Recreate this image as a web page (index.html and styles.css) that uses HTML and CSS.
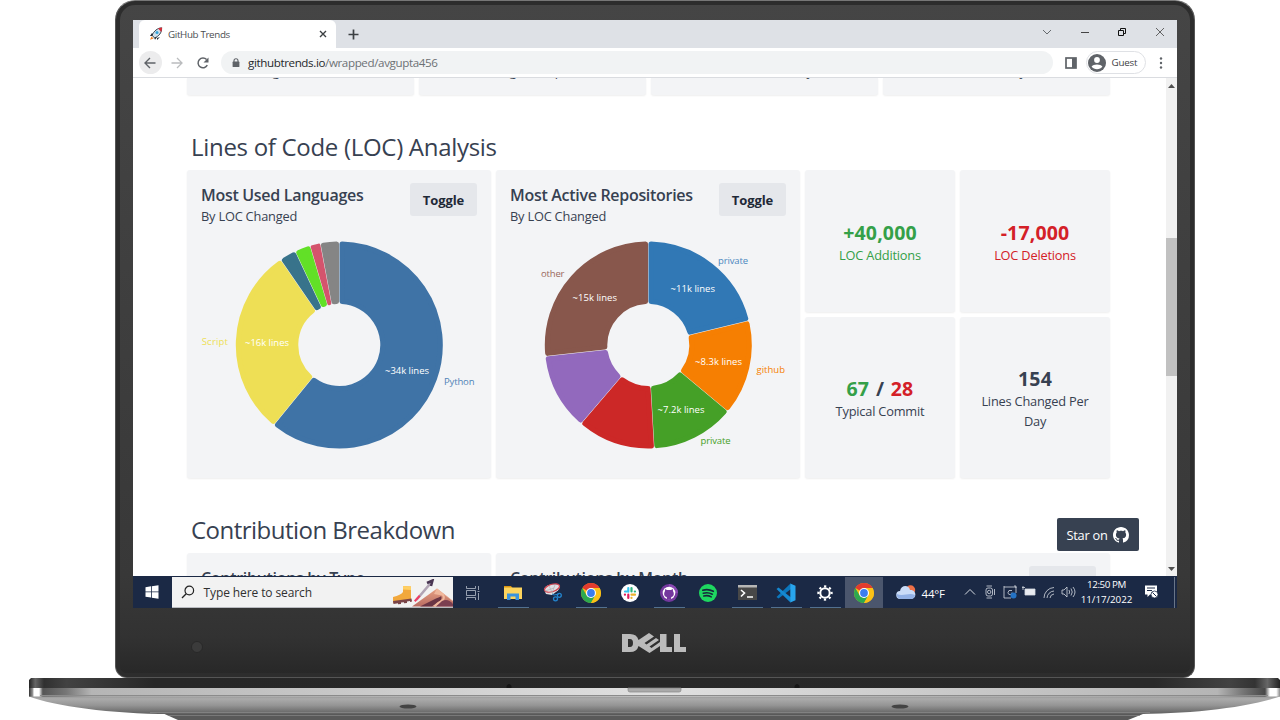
FILE: index.html
```html
<!DOCTYPE html>
<html lang="en">
<head>
<meta charset="utf-8">
<title>GitHub Trends</title>
<link rel="stylesheet" href="styles.css">
</head>
<body>
<svg class="defs" width="0" height="0" aria-hidden="true">
  <defs>
    <symbol id="chrome" viewBox="0 0 20 20">
      <circle cx="10" cy="10" r="10" fill="#fbc116"/>
      <path d="M10 10 1.34 5A10 10 0 0 1 18.66 5H10z" fill="#e33b2e"/>
      <path d="M1.34 5A10 10 0 0 0 10 20L14.33 12.5 10 10 5.67 12.5z" fill="#2da94f"/>
      <path d="M10 5h8.66A10 10 0 0 1 10 20l4.33-7.5z" fill="#fbc116"/>
      <circle cx="10" cy="10" r="5" fill="#fff"/>
      <circle cx="10" cy="10" r="3.9" fill="#3b7ded"/>
    </symbol>
    <symbol id="octocat" viewBox="0 0 16 16">
      <path d="M8 0C3.58 0 0 3.58 0 8c0 3.54 2.29 6.53 5.47 7.59.4.07.55-.17.55-.38 0-.19-.01-.82-.01-1.49-2.01.37-2.53-.49-2.69-.94-.09-.23-.48-.94-.82-1.13-.28-.15-.68-.52-.01-.53.63-.01 1.08.58 1.23.82.72 1.21 1.87.87 2.33.66.07-.52.28-.87.51-1.07-1.78-.2-3.64-.89-3.64-3.95 0-.87.31-1.59.82-2.15-.08-.2-.36-1.02.08-2.12 0 0 .67-.21 2.2.82.64-.18 1.32-.27 2-.27s1.36.09 2 .27c1.53-1.04 2.2-.82 2.2-.82.44 1.1.16 1.92.08 2.12.51.56.82 1.27.82 2.15 0 3.07-1.87 3.75-3.65 3.95.29.25.54.73.54 1.48 0 1.07-.01 1.93-.01 2.2 0 .21.15.46.55.38A8.01 8.01 0 0 0 16 8c0-4.42-3.58-8-8-8z"/>
    </symbol>
  </defs>
</svg>
<div class="device">
  <div class="lid">
    <div class="screen">
      <div class="tabstrip">
        <div class="tab">
          <svg class="rocket" width="14" height="14" viewBox="0 0 14 14"><path d="M3 6 1 9l2 0M8 11l0 2 3-3" fill="#26323d"/><path d="M12.6.8C8.5 1 5 4 3 8.3L5.6 11C10 9 12.800 6 12.600.8z" fill="#cfe0ec" stroke="#26323d" stroke-width=".9"/><path d="M9 1.500 13.200.400 12.300 5z" fill="#dc2b36"/><circle cx="8" cy="5.600" r="1.500" fill="#35a3d8"/><path d="M4 6 1.500 8.500 3.500 9zM8.200 10 6 12.800 5.400 11z" fill="#27303a"/><path d="M2.500 9.500 1 12.800l3.600-1.300z" fill="#f08426"/></svg>
          <span class="tab-title">GitHub Trends</span>
          <svg width="8" height="8" viewBox="0 0 8 8"><path d="M1 1 7 7M7 1 1 7" stroke="#3c4043" stroke-width="1.400"/></svg>
        </div>
        <svg class="newtab" width="11" height="11" viewBox="0 0 11 11"><path d="M5.500.500v10M.500 5.500h10" stroke="#3c4043" stroke-width="1.700"/></svg>
        <div class="winctl">
          <svg width="10" height="10" viewBox="0 0 10 10"><path d="M1 3 5 7 9 3" fill="none" stroke="#666a6e"/></svg>
          <svg width="10" height="10" viewBox="0 0 10 10"><path d="M1 5.500h8" stroke="#444"/></svg>
          <svg width="10" height="10" viewBox="0 0 10 10"><path d="M1.500 3.500h5v5h-5zM3.500 3V1.500h5v5H7" fill="none" stroke="#111"/></svg>
          <svg width="10" height="10" viewBox="0 0 10 10"><path d="M1 1 9 9M9 1 1 9" stroke="#555" stroke-width=".9"/></svg>
        </div>
      </div>
      <div class="toolbar">
        <span class="back"><svg width="12" height="12" viewBox="0 0 12 12"><path d="M11.500 6H1.500M6 1 1 6l5 5" fill="none" stroke="#5f6368" stroke-width="1.400"/></svg></span>
        <svg class="fwd" width="12" height="12" viewBox="0 0 12 12"><path d="M.500 6H10.500M6 1l5 5-5 5" fill="none" stroke="#babcbe" stroke-width="1.300"/></svg>
        <svg class="reload" width="12" height="12" viewBox="0 0 12 12"><path d="M10.300 8.200A4.900 4.900 0 1 1 9.600 2.600" fill="none" stroke="#5f6368" stroke-width="1.500"/><path d="M11.500.500v5h-5z" fill="#5f6368"/></svg>
        <div class="omnibox">
          <svg width="8" height="10" viewBox="0 0 8 10"><path d="M2 4V2.800a2 2 0 0 1 4 0V4" fill="none" stroke="#5f6368" stroke-width="1.100"/><rect x=".6" y="3.600" width="6.800" height="5.400" rx=".6" fill="#5f6368"/></svg>
          <span class="url"><b>githubtrends.io</b>/wrapped/avgupta456</span>
        </div>
        <svg class="panel" width="12" height="12" viewBox="0 0 12 12"><rect x="1" y="1" width="10" height="10" fill="#fff" stroke="#5f6368" stroke-width="1.700"/><path d="M7 1h4v10H7z" fill="#5f6368"/></svg>
        <div class="guest">
          <svg width="18" height="18" viewBox="0 0 18 18"><circle cx="9" cy="9" r="9" fill="#5f6368"/><circle cx="9" cy="6" r="2.900" fill="#fff"/><path d="M3.600 12.600C5 9.800 13 9.800 14.400 12.600 12 16.200 6 16.200 3.600 12.600z" fill="#fff"/></svg>
          <span>Guest</span>
        </div>
        <svg class="dots" width="4" height="14" viewBox="0 0 4 14"><g fill="#5f6368"><circle cx="2" cy="2.500" r="1.200"/><circle cx="2" cy="7" r="1.200"/><circle cx="2" cy="11.500" r="1.200"/></g></svg>
      </div>
      <div class="viewport">
        <main class="page">
          <div class="stats">
            <div class="card"><span class="s1">Longest</span></div>
            <div class="card"><span class="s2">Longest Gap</span></div>
            <div class="card"><span class="s3">Best Day</span></div>
            <div class="card"><span class="s4">Best Day</span></div>
          </div>
          <h1 class="h-loc">Lines of Code (LOC) Analysis</h1>
          <div class="loc">
            <section class="card chart">
              <header><div><h2 class="t-lang">Most Used Languages</h2><p>By LOC Changed</p></div><button>Toggle</button></header>
              <svg class="donut" id="languages" width="278" height="240"></svg>
            </section>
            <section class="card chart">
              <header><div><h2 class="t-repo">Most Active Repositories</h2><p>By LOC Changed</p></div><button>Toggle</button></header>
              <svg class="donut" id="repos" width="277" height="240"></svg>
            </section>
            <div class="card metric green"><strong>+40,000</strong><span>LOC Additions</span></div>
            <div class="card metric red"><strong>-17,000</strong><span>LOC Deletions</span></div>
            <div class="card metric"><strong class="pair"><i class="green">67</i> / <i class="red">28</i></strong><span>Typical Commit</span></div>
            <div class="card metric"><strong>154</strong><span>Lines Changed Per<br>Day</span></div>
          </div>
          <h1 class="h-contrib">Contribution Breakdown</h1>
          <div class="contrib">
            <section class="card"><h2 class="t-type">Contributions by Type</h2></section>
            <section class="card"><h2 class="t-month">Contributions by Month</h2><button></button></section>
          </div>
          <a class="star"><span>Star on</span><svg width="16" height="16" fill="#fff"><use href="#octocat"/></svg></a>
        </main>
        <div class="scrollbar">
          <svg width="7" height="4" viewBox="0 0 7 4"><path d="M0 4 3.500 0 7 4z" fill="#505050"/></svg>
          <div class="thumb"></div>
          <svg class="down" width="7" height="4" viewBox="0 0 7 4"><path d="M0 0 3.500 4 7 0z" fill="#505050"/></svg>
        </div>
      </div>
      <div class="taskbar">
        <span class="start"><svg width="14" height="14" viewBox="0 0 14 14"><path d="M.500 2.200 6 1.300V6.500H.500zM6.800 1.200 13.500.200V6.500H6.800zM.500 7.300H6v5.200L.500 11.700zM6.800 7.300h6.700v6.400L6.800 12.700z" fill="#fff"/></svg></span>
        <div class="search">
          <svg width="14" height="14" viewBox="0 0 14 14"><circle cx="8.300" cy="5.500" r="4.300" fill="none" stroke="#222" stroke-width="1.200"/><path d="M5.200 8.700 1 13" stroke="#222" stroke-width="1.300"/></svg>
          <span>Type here to search</span>
          <svg class="boots" width="61" height="28" viewBox="0 0 61 28"><defs><linearGradient id="peak" x1="0" y1="0" x2="0" y2="1"><stop offset="0" stop-color="#e8a183"/><stop offset="1" stop-color="#b96c62"/></linearGradient></defs><path d="M11 7 19 7.500V21L1 24V18q8-2 10-5z" fill="#f2a83d"/><path d="M11 7 19 7.500v3.500l-8-.5z" fill="#ffcf62"/><path d="M1 22 19.500 19.500l.500 3-2 .5v-1l-3 .5v1.500l-3 .3v-1l-3 .3V25l-3 .3v-1l-4.500.7z" fill="#7a4448"/><path d="M23.500 20 38 3l2 1.500L25.500 21.500z" fill="#b0a3b4"/><path d="m22 21.500 5-5.500 1.500 1.500-5 5.500z" fill="#ef3b64"/><path d="M35 4 40.500 1.500 39 7" fill="none" stroke="#493653" stroke-width="2.500"/><path d="M20 27.500 45 9.500 61 22v5.500z" fill="url(#peak)"/><path d="m28 27.500 16-8q6-2 5-3 2 5-4 7l-3 4z" fill="#6a3544"/><path d="M45 9.500 42 15l8 1.500q3 3-4 6.500l-6 4.500h4c6-4 11-7 8-12l9 7v-.5z" fill="#f0b79c"/><path d="M50 22q6-3 11 3v2.500H44z" fill="#7b3f50"/></svg>
        </div>
        <span class="app"><svg width="15" height="14" viewBox="0 0 15 14"><path d="M1.500 0v2.500h9V0M1.500 14v-2.500h9V14M1.500 4.500h9v5h-9zM13.500 0v4M13.500 7v7M12.500 5.500h2" fill="none" stroke="#b8bfcb" stroke-width=".8"/></svg></span>
        <span class="app run wide"><svg width="18" height="16" viewBox="0 0 18 16"><path d="M0 1h7l1.500 2H0z" fill="#d99512"/><path d="M0 2.500h18V14H0z" fill="#fdd45d"/><path d="M3 15V8.500h12V15h-3.500v-3.500h-5V15z" fill="#3b93dd"/></svg></span>
        <span class="app"><svg width="19" height="19" viewBox="0 0 19 19"><path d="M1 6.500C2 1.500 9 .5 16 1.500q2 2-1 6L9 12l-6-1z" fill="#e1dfe3"/><ellipse cx="9" cy="5" rx="7.800" ry="3.700" transform="rotate(-18 9 5)" fill="none" stroke="#d3424e" stroke-width="1.200"/><path d="m6 3 4 8M12 2 9 10M2 8l9-3" stroke="#aaa" stroke-width=".6"/><path d="m9 11 2 1 5-1" stroke="#2384cd" fill="none"/><circle cx="16.300" cy="12.300" r="2" fill="none" stroke="#2384cd" stroke-width="1.300"/><circle cx="12.500" cy="15.800" r="2" fill="none" stroke="#2384cd" stroke-width="1.300"/></svg></span>
        <span class="app run"><svg width="20" height="20"><use href="#chrome"/></svg></span>
        <span class="app"><svg width="18" height="18" viewBox="0 0 18 18"><circle cx="9" cy="9" r="9" fill="#fff"/><g stroke-width="2.200" stroke-linecap="round"><path d="M7.300 4v3.700M4 7.500h3" stroke="#36c5f0"/><path d="M10.500 4v3.500M14 7.500h-.200" stroke="#2eb67d"/><path d="M10.500 10.700H14M10.500 14v-.200" stroke="#ecb22e"/><path d="M4 10.700h-.1M7.300 10.700V14" stroke="#e01e5a"/></g></svg></span>
        <span class="app run"><svg width="18" height="18" viewBox="0 0 18 18"><circle cx="9" cy="9" r="9" fill="#74389d"/><path d="M9 0a9 9 0 0 1 9 9h-9z" fill="#8a49b3"/><circle cx="9" cy="9" r="6.300" fill="#fff"/><path d="M6.800 15.500v-2.400C3.300 12.500 4 8.500 5 7.300L5.200 5l1.800.9h4l1.800-.9.200 2.300c1 1.200 1.700 5.200-1.800 5.800v2.400z" fill="#74389d"/></svg></span>
        <span class="app"><svg width="18" height="18" viewBox="0 0 18 18"><circle cx="9" cy="9" r="9" fill="#1ed760"/><path d="M3.800 6.200q5.500-1.600 10.500 1.100M4.300 9.200q4.800-1.300 9 1M4.800 12q4-1 7.400 .9" fill="none" stroke="#17283b" stroke-width="1.600" stroke-linecap="round"/></svg></span>
        <span class="app run"><svg width="19" height="15" viewBox="0 0 19 15"><path d="M0 0h19v15H0z" fill="#484848"/><path d="M0 0h19v2.500H0z" fill="#b6b6b6"/><path d="m3 5 3.500 3L3 11.500M9 12h6" fill="none" stroke="#fff" stroke-width="1.600"/></svg></span>
        <span class="app run"><svg width="20" height="20" viewBox="0 0 20 20"><path d="M14.500.500 15 6 2.500 15.500.500 14z" fill="#0b76bd"/><path d="M.500 6 2.500 4.500 15 14.500l-.500 5z" fill="#1588d1"/><path d="M14.300.500 19.500 2.800v14.400l-5.200 2.300z" fill="#28a5ee"/></svg></span>
        <span class="app run"><svg width="16" height="16" viewBox="0 0 16 16"><circle cx="8" cy="8" r="4.700" fill="none" stroke="#fff" stroke-width="2"/><circle cx="8" cy="8" r="6.600" fill="none" stroke="#fff" stroke-width="2.200" stroke-dasharray="2.200 2.984" transform="rotate(-10 8 8)"/></svg></span>
        <span class="app active"><svg width="20" height="20"><use href="#chrome"/></svg></span>
        <svg class="weather" width="20" height="15" viewBox="0 0 20 15"><circle cx="14.500" cy="5" r="4.700" fill="#ef7047"/><path d="M4.500 14a4 4 0 0 1-.5-8C5-.5 13-.5 14 5c7-.5 7 9 1 9z" fill="#cadcf8"/><path d="M4.500 14a4 4 0 0 1-3.500-5c6 3 12-2 18 1q-.5 4-4 4z" fill="#92b1e6"/></svg>
        <span class="temp">44°F</span>
        <svg class="tray" width="112" height="16" viewBox="0 0 112 16" fill="none" stroke="#d5dae2" stroke-width=".8"><path d="m1 10.500 5-5 5 5" stroke-width="1"/><rect x="22" y="4" width="6.500" height="8" rx="2"/><circle cx="25.200" cy="8" r="1.700"/><path d="M22.500 2h5.500M22.500 14h5.500M30.500 5v6"/><path d="M47 14h-7V3h12v6M40 3v-1M50 2h2v2"/><path d="M48 6.500q-4-1-4 2t4 1.500v-1.500"/><circle cx="49.500" cy="11.500" r="3" fill="#2573c5" stroke="none"/><path d="M61 5h10v6H61z" fill="#e8ebf0"/><path d="M58 3.500h3M59 2v4"/><path d="M80 14A10.500 10.500 0 0 1 90 3.500M83 14a7.500 7.500 0 0 1 7-7M86 14a4.500 4.500 0 0 1 4-4"/><path d="M98 6h2l3-3v10l-3-3h-2zM105 6q1.200 2 0 4M107 4.500q2.500 3.500 0 7M109 3q4 5 0 10"/></svg>
        <div class="clock"><span class="time">12:50 PM</span><span>11/17/2022</span></div>
        <svg class="note" width="15" height="14" viewBox="0 0 15 14"><path d="M1 .500h12v9H6L3.500 12V9.500H1z" fill="#fff"/><path d="M3 3h8M3 5.500h5" stroke="#1b2945"/><circle cx="10.500" cy="9.500" r="3.500" fill="#fff" stroke="#1b2945" stroke-width=".8"/><path d="m8.500 7.500 4 4" stroke="#1b2945"/></svg>
        <span class="peek"></span>
      </div>
    </div>
    <div class="chin">
      <span class="sensor"></span>
      <svg class="dell" role="img" aria-label="Dell" width="65" height="21" viewBox="0 0 65 21"><g fill="#bbb"><path fill-rule="evenodd" d="M0 1h8q7 0 8.500 6L27 0l5 3.500-9.500 6.500 2 1.500 9.500-6.500 3 2-9.500 6.500 2 1.500 8.500-6V1h6.500v13H50v5H38v-6L27.500 20 16.500 13Q15 19 8 19H0zM6 6v8h2q3 0 3-4T8 6z"/><path d="M52 1h6v13h6v5H52z"/></g></svg>
    </div>
  </div>
  <svg class="base" width="1280" height="42" viewBox="0 0 1280 42">
    <defs>
      <linearGradient id="top"><stop offset="0" stop-color="#222"/><stop offset=".005" stop-color="#666"/><stop offset=".012" stop-color="#303030"/><stop offset=".03" stop-color="#424242"/><stop offset=".1" stop-color="#272727"/><stop offset=".9" stop-color="#292929"/><stop offset=".96" stop-color="#424242"/><stop offset=".98" stop-color="#333"/><stop offset=".99" stop-color="#666"/><stop offset="1" stop-color="#222"/></linearGradient>
      <linearGradient id="edge" gradientUnits="userSpaceOnUse" x1="29" y1="0" x2="1280" y2="0"><stop offset="0" stop-color="#333"/><stop offset=".003" stop-color="#999"/><stop offset=".004" stop-color="#fff"/><stop offset=".008" stop-color="#fff"/><stop offset=".011" stop-color="#555"/><stop offset=".03" stop-color="#777"/><stop offset=".05" stop-color="#b5b5b5"/><stop offset=".5" stop-color="#e0e0e0"/><stop offset=".95" stop-color="#b5b5b5"/><stop offset=".97" stop-color="#777"/><stop offset=".988" stop-color="#484848"/><stop offset=".992" stop-color="#fff"/><stop offset=".997" stop-color="#fff"/><stop offset="1" stop-color="#888"/></linearGradient>
      <linearGradient id="belly" x1="0" y1="0" x2="0" y2="1"><stop offset="0" stop-color="#8d8d8d"/><stop offset=".2" stop-color="#ababab"/><stop offset=".55" stop-color="#949494"/><stop offset="1" stop-color="#606060"/></linearGradient>
    </defs>
    <path d="M160 34H1148L1128 42H178z" fill="#595959"/>
    <path d="M168 37.500H1140" stroke="#868686" stroke-width=".7"/>
    <path d="M29 17H1280V18.500C1245 30 1190 36 1130 36H170C110 36 55 28 29 18.500z" fill="url(#belly)"/>
    <path d="M150 34.500H1150" stroke="#8c8c8c" stroke-width=".7"/>
    <path d="M29 10H1280V18.500H29z" fill="url(#edge)"/>
    <path d="M40 17.500H1268" stroke="#8b8b8b"/>
    <path d="M31 0H1278l2 2v8H29V2z" fill="url(#top)"/>
    <path d="M628 10h53v2q0 2-2 2H630q-2 0-2-2z" fill="#aaa" stroke="#888" stroke-width=".7"/>
    <g fill="#161616"><path d="M506.500 10v-2q2.500-4 5 0v2zM794.500 10v-2q2.500-4 5 0v2z"/></g>
    <g fill="#444"><ellipse cx="408" cy="28.500" rx="8.500" ry="2"/><ellipse cx="900" cy="28.500" rx="8.500" ry="2"/></g>
  </svg>
</div>
<script src="charts.js"></script>
</body>
</html>
```

FILE: styles.css
```css
* { box-sizing: border-box; }
body { margin: 0; background: #fff; overflow: hidden; font-family: "Open Sans", "Noto Sans", sans-serif; color: #374151; }
.defs { position: absolute; }
svg { display: block; flex: none; }
h1, h2, p { margin: 0; font-weight: 400; }
.device { width: 1280px; height: 720px; overflow: hidden; }
.lid { width: 1080px; height: 678px; margin-left: 114.500px; padding: 19px 18px 0 17px; border-radius: 20px 20px 12px 12px; background: linear-gradient(#454545, #383838 85%, #323232 94%, #272727); border: 1px solid #555; border-top-color: #777; box-shadow: inset 0 0 0 4px #2d2d2d; }
.screen { width: 1044px; height: 587.500px; display: flex; flex-direction: column; overflow: hidden; background: #fff; }

.tabstrip { height: 28px; flex: none; display: flex; align-items: center; background: #dee1e6; padding-left: 6px; }
.tab { width: 197px; height: 28px; border-radius: 6px 6px 0 0; background: #fff; display: flex; align-items: center; padding: 0 9px 0 10px; }
.tab-title { flex: 1; margin-left: 5.500px; font-size: 9.800px; color: #4a4d51; letter-spacing: -.35px; }
.newtab { margin-left: 12px; }
.winctl { margin-left: auto; display: flex; gap: 27.500px; padding: 0 12px 4px 0; }
.toolbar { height: 30px; flex: none; display: flex; align-items: center; border-bottom: 1px solid #dadce0; padding-left: 6px; }
.back { width: 23px; height: 23px; border-radius: 50%; background: #ececed; display: grid; place-items: center; }
.fwd { margin-left: 9px; }
.reload { margin-left: 14px; }
.omnibox { width: 832px; height: 23px; margin-left: 12px; border-radius: 12px; background: #f1f3f4; display: flex; align-items: center; padding-left: 11px; }
.url { margin-left: 8.500px; font-size: 11.600px; color: #6d7175; letter-spacing: -.38px; }
.url b { font-weight: 400; color: #25282b; }
.panel { margin-left: 12px; }
.guest { width: 60px; height: 23px; margin-left: 9px; border: 1px solid #dfe1e5; border-radius: 12px; display: flex; align-items: center; gap: 6px; padding-left: 1px; font-size: 9.800px; color: #3c4043; letter-spacing: -.2px; }
.dots { margin-left: 13px; }

.viewport { height: 498px; flex: none; display: flex; overflow: hidden; }
.page { position: relative; width: 1033px; height: 498px; padding-left: 54.500px; overflow: hidden; }
.card { background: #f3f4f6; border-radius: 3px; box-shadow: 0 1px 2px rgba(0,0,0,.07); }
.stats { display: grid; grid-template-columns: repeat(4, 227px); gap: 5px; height: 17px; }
.stats .card { display: flex; align-items: flex-end; overflow: hidden; border-radius: 0 0 3px 3px; }
.stats span { font-size: 13px; line-height: 18px; margin-bottom: 15px; white-space: nowrap; }
.s1 { padding-left: 63px; }
.s2 { padding-left: 68px; }
.s3 { padding-left: 109px; }
.s4 { padding-left: 90px; }
h1 { margin-left: 4px; font-size: 24px; line-height: 34px; white-space: nowrap; color: #374151; }
.h-loc { margin-top: 35px; margin-bottom: 6px; letter-spacing: -.3px; }
.loc { display: grid; grid-template-columns: 304px 304px 150px 150px; grid-template-rows: 142px 161px; gap: 5px; }
.chart { grid-row: span 2; padding: 13px 14px; }
.chart header { display: flex; justify-content: space-between; height: 50px; }
h2 { font-size: 16px; line-height: 25px; font-weight: 600; white-space: nowrap; letter-spacing: -.3px; }
.chart p { font-size: 12.800px; line-height: 17px; letter-spacing: -.2px; }
button { width: 67px; height: 33px; border: 0; border-radius: 3px; background: #e5e7eb; color: #1f2937; font: 700 13px "Open Sans", sans-serif; padding: 1px 0 0; letter-spacing: -.1px; }
.donut text { font-size: 9.500px; }
.metric { display: flex; flex-direction: column; align-items: center; justify-content: center; padding-top: 2px; font-size: 12.800px; line-height: 20px; letter-spacing: -.2px; text-align: center; }
.metric strong { font-size: 19.500px; line-height: 25px; letter-spacing: .15px; }
.metric .pair { word-spacing: 1.500px; }
.metric i { font-style: normal; }
.green { color: #34a048; }
.red { color: #d42027; }
.h-contrib { margin-top: 35px; margin-bottom: 6px; letter-spacing: -.52px; }
.contrib { display: grid; grid-template-columns: 304px 614px; gap: 5px; height: 80px; }
.contrib .card { padding: 13px 14px; display: flex; justify-content: space-between; }
.star { position: absolute; left: 924px; top: 440px; width: 82px; height: 33px; border-radius: 2px; background: #374151; color: #fff; display: flex; align-items: center; justify-content: center; gap: 5px; font-size: 12.800px; letter-spacing: -.25px; }
.scrollbar { width: 11px; background: #f1f1f1; display: flex; flex-direction: column; align-items: center; padding: 6px 0 5px; }
.thumb { width: 11px; height: 138px; margin-top: 150px; background: #c1c1c1; }
.down { margin-top: auto; }

.taskbar { height: 31.500px; padding-top: 1px; flex: none; display: flex; align-items: center; background: #1b2945; color: #fff; }
.start { width: 39px; display: grid; place-items: center; }
.search { width: 281px; height: 30.500px; background: #f2f2f2; border-bottom: 1px solid #b9bbc0; color: #303030; display: flex; align-items: center; padding-left: 9px; font-size: 12px; letter-spacing: -.1px; }
.search span { margin: 2px 0 0 9px; }
.boots { margin-left: auto; align-self: flex-end; }
.app { width: 39px; height: 30.500px; display: grid; place-items: center; padding-top: 1px; }
.run { background: linear-gradient(#52708f, #52708f) center bottom / 31px 1px no-repeat; }
.wide { margin-left: 2px; }
.active { width: 38px; background: #4b566d; }
.weather { margin-left: 13px; }
.temp { font-size: 11.500px; margin: 2px 0 0 6px; width: 36px; letter-spacing: -.2px; }
.tray { margin-left: 6px; }
.clock { width: 56px; margin-left: 3px; display: flex; flex-direction: column; align-items: center; font-size: 9.800px; line-height: 15px; white-space: nowrap; letter-spacing: -.05px; }
.time { letter-spacing: -.4px; }
.note { margin-left: 9px; }
.peek { width: 1px; height: 31px; margin-left: auto; margin-right: 2px; background: #697588; }
.chin { height: 70px; display: flex; align-items: center; padding-left: 58px; }
.sensor { width: 12px; height: 12px; margin-top: 8px; border-radius: 50%; background: #3b3b3b; border: 1px solid #292929; }
.dell { margin-left: 419px; margin-top: 1px; }
```

FILE: charts.js
```js
const NS = "http://www.w3.org/2000/svg";
const OUTER = 103.5, INNER = 41, ROUND = 2.6, INSET = 2.8;

function add(parent, name, attrs, text) {
  const el = document.createElementNS(NS, name);
  for (const k in attrs) el.setAttribute(k, attrs[k]);
  if (text) el.textContent = text;
  parent.appendChild(el);
}

// Ring segment with rounded corners, angles in degrees clockwise from noon.
function segment(cx, cy, from, to, round, inset) {
  const ro = OUTER - round, ri = INNER + round;
  const a = from * Math.PI / 180, b = to * Math.PI / 180;
  const po = Math.asin(inset / ro);
  const pi = Math.min(Math.asin(inset / ri), (b - a) / 2 - 0.005);
  const at = (r, t) => (cx + r * Math.sin(t)).toFixed(2) + " " + (cy - r * Math.cos(t)).toFixed(2);
  const large = to - from > 180 ? 1 : 0;
  return `M${at(ro, a + po)}A${ro} ${ro} 0 ${large} 1 ${at(ro, b - po)}L${at(ri, b - pi)}A${ri} ${ri} 0 ${large} 0 ${at(ri, a + pi)}Z`;
}

function donut(id, cx, cy, slices, labels) {
  const svg = document.getElementById(id);
  let from = 0;
  for (const [to, color] of slices) {
    const narrow = to - from < 8;
    const round = narrow ? 1.8 : ROUND, inset = narrow ? 2 : INSET;
    add(svg, "path", { d: segment(cx, cy, from, to, round, inset), fill: color, stroke: color, "stroke-width": round * 2, "stroke-linejoin": "round" });
    from = to;
  }
  for (const [x, y, width, color, text] of labels) {
    add(svg, "text", { x, y, fill: color, textLength: width }, text);
  }
}

donut("languages", 138.3, 112,
  [[219.3, "#3f73a6"], [325.5, "#eedf55"], [334.8, "#38738b"], [343.6, "#62e027"], [349.4, "#d4546d"], [360, "#858585"]],
  [[184, 140.5, 44, "#fff", "~34k lines"], [44, 112.5, 44, "#fff", "~16k lines"], [243, 152, 30.5, "#4f83b6", "Python"], [-18, 112, 45, "#eedf55", "JavaScript"]]);

donut("repos", 138.3, 112,
  [[76.4, "#3178b5"], [129.8, "#f67f02"], [176.7, "#45a027"], [220.5, "#cc2827"], [263.7, "#9269bd"], [360, "#88574c"]],
  [[160.5, 59, 44.5, "#fff", "~11k lines"], [185, 132, 47, "#fff", "~8.3k lines"], [147.5, 180, 47, "#fff", "~7.2k lines"], [62.5, 68, 44.5, "#fff", "~15k lines"],
   [208, 31, 30, "#4b88bf", "private"], [246.5, 140, 28.5, "#f67f02", "github"], [190.5, 211, 30, "#45a027", "private"], [31, 44, 23.5, "#99685d", "other"]]);
```
